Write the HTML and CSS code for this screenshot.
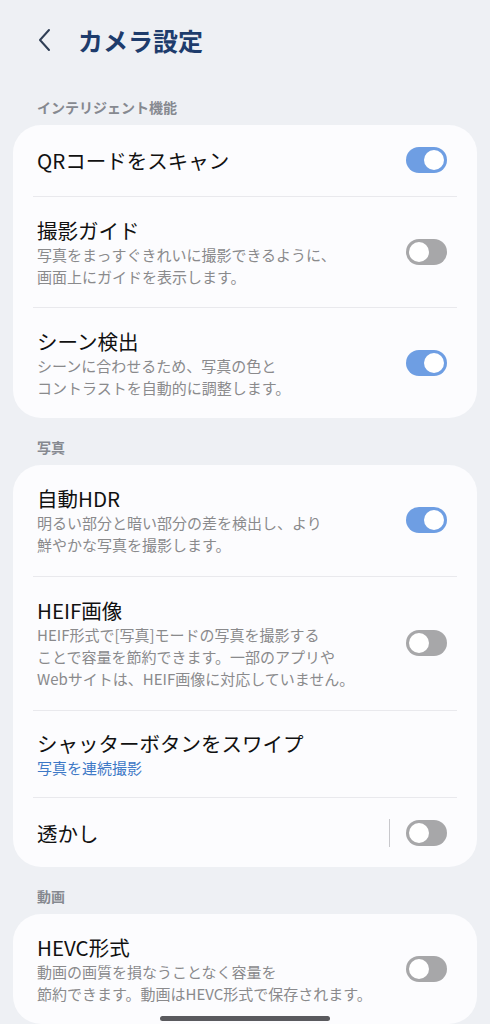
FILE: index.html
```html
<!DOCTYPE html>
<html lang="ja">
<head>
<meta charset="utf-8">
<link rel="stylesheet" href="styles.css">
</head>
<body>
<header class="header">
  <svg class="back" width="16" height="24" viewBox="0 0 16 24"><path d="M12 2 L3 12 L12 22" fill="none" stroke="#2f3e55" stroke-width="2" stroke-linecap="round" stroke-linejoin="round"/></svg>
  <h1 class="title">カメラ設定</h1>
</header>

<div class="label">インテリジェント機能</div>
<section class="card">
  <div class="row single">
    <div class="text"><div class="name">QRコードをスキャン</div></div>
    <span class="toggle on"></span>
  </div>
  <div class="row">
    <div class="text"><div class="name">撮影ガイド</div><div class="sub">写真をまっすぐきれいに撮影できるように、<br>画面上にガイドを表示します。</div></div>
    <span class="toggle"></span>
  </div>
  <div class="row">
    <div class="text"><div class="name">シーン検出</div><div class="sub">シーンに合わせるため、写真の色と<br>コントラストを自動的に調整します。</div></div>
    <span class="toggle on"></span>
  </div>
</section>

<div class="label">写真</div>
<section class="card">
  <div class="row tall">
    <div class="text"><div class="name">自動HDR</div><div class="sub">明るい部分と暗い部分の差を検出し、より<br>鮮やかな写真を撮影します。</div></div>
    <span class="toggle on"></span>
  </div>
  <div class="row tall">
    <div class="text"><div class="name">HEIF画像</div><div class="sub">HEIF形式で[写真]モードの写真を撮影する<br>ことで容量を節約できます。一部のアプリや<br>Webサイトは、HEIF画像に対応していません。</div></div>
    <span class="toggle"></span>
  </div>
  <div class="row compact">
    <div class="text"><div class="name">シャッターボタンをスワイプ</div><div class="sub link">写真を連続撮影</div></div>
  </div>
  <div class="row single last">
    <div class="text"><div class="name">透かし</div></div>
    <span class="vline"></span>
    <span class="toggle"></span>
  </div>
</section>

<div class="label">動画</div>
<section class="card">
  <div class="row">
    <div class="text"><div class="name">HEVC形式</div><div class="sub">動画の画質を損なうことなく容量を<br>節約できます。動画はHEVC形式で保存されます。</div></div>
    <span class="toggle"></span>
  </div>
</section>

<div class="home"></div>
</body>
</html>
```
FILE: styles.css
```css
html, body {
  margin: 0;
  padding: 0;
}
body {
  background: #eef0f4;
  font-family: "Noto Sans CJK JP", "Noto Sans", sans-serif;
  color: #111;
  height: 1024px;
  overflow: hidden;
}
.header {
  display: flex;
  align-items: center;
  padding: 23px 0 21px 37px;
  height: 34px;
}
.back {
  display: block;
  margin-right: 25px;
}
.title {
  margin: 0;
  font-size: 25px;
  line-height: 34px;
  font-weight: 700;
  color: #1e3c6c;
}
.label {
  padding: 19px 37px 8px;
  font-size: 14px;
  line-height: 20px;
  font-weight: 700;
  color: #868990;
}
.card {
  margin: 0 13px;
  background: #fcfcfe;
  border-radius: 28px;
  padding: 0 20px;
}
.row {
  display: flex;
  align-items: center;
  padding: 19px 10px 19px 4px;
  border-top: 1px solid #e9e9ed;
}
.row:first-child {
  border-top: none;
}
.row.tall {
  padding-bottom: 20px;
}
.row.single {
  padding-top: 21px;
  padding-bottom: 22px;
}
.row.single.last {
  padding-bottom: 20px;
}
.row.compact {
  padding-top: 18px;
  padding-bottom: 18px;
}
.text {
  flex: 1;
}
.name {
  font-size: 20.5px;
  line-height: 28px;
}
.sub {
  font-size: 15px;
  line-height: 22px;
  color: #8a8a8c;
}
.sub.link {
  color: #3d78c6;
}
.vline {
  width: 1px;
  height: 28px;
  background: #c8c8cc;
  margin-right: 16px;
}
.toggle {
  position: relative;
  flex: none;
  width: 41px;
  height: 26px;
  border-radius: 13px;
  background: #a7a7a9;
}
.toggle::after {
  content: "";
  position: absolute;
  top: 3px;
  left: 3px;
  width: 20px;
  height: 20px;
  border-radius: 50%;
  background: #fff;
}
.toggle.on {
  background: #6e9ee3;
}
.toggle.on::after {
  left: 18px;
}
.home {
  position: fixed;
  left: 160px;
  bottom: 3px;
  width: 170px;
  height: 5px;
  border-radius: 3px;
  background: #5a5a5e;
}
```
